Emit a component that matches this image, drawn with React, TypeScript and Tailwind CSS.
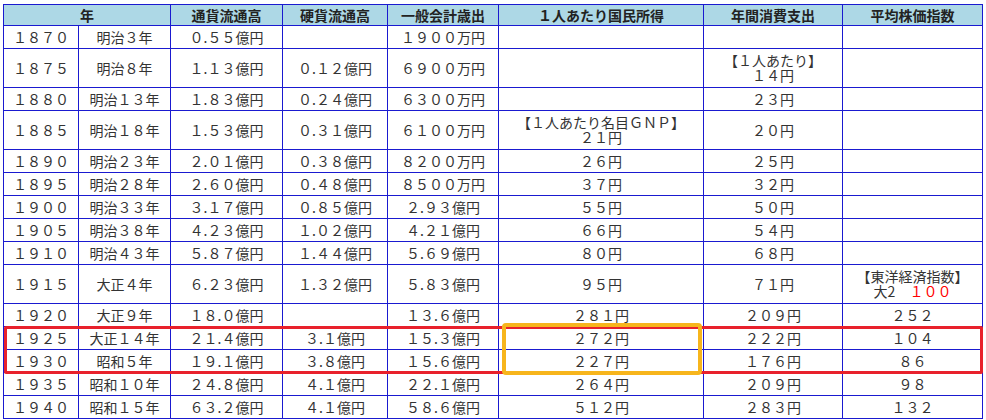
import React from 'react';

type Cell = React.ReactNode;

// two-line cells get a tighter line height, like the original page
function Two({ a, b }: { a: React.ReactNode; b: React.ReactNode }) {
  return (
    <div className="leading-[15px] py-[1px]">
      {a}
      <br />
      {b}
    </div>
  );
}

const rows: Cell[][] = [
  ['１８７０', '明治３年', '０.５５億円', '', '１９００万円', '', '', ''],
  ['１８７５', '明治８年', '１.１３億円', '０.１２億円', '６９００万円', '', <Two a="【１人あたり】" b="１４円" />, ''],
  ['１８８０', '明治１３年', '１.８３億円', '０.２４億円', '６３００万円', '', '２３円', ''],
  ['１８８５', '明治１８年', '１.５３億円', '０.３１億円', '６１００万円', <Two a="【１人あたり名目ＧＮＰ】" b="２１円" />, '２０円', ''],
  ['１８９０', '明治２３年', '２.０１億円', '０.３８億円', '８２００万円', '２６円', '２５円', ''],
  ['１８９５', '明治２８年', '２.６０億円', '０.４８億円', '８５００万円', '３７円', '３２円', ''],
  ['１９００', '明治３３年', '３.１７億円', '０.８５億円', '２.９３億円', '５５円', '５０円', ''],
  ['１９０５', '明治３８年', '４.２３億円', '１.０２億円', '４.２１億円', '６６円', '５４円', ''],
  ['１９１０', '明治４３年', '５.８７億円', '１.４４億円', '５.６９億円', '８０円', '６８円', ''],
  [
    '１９１５', '大正４年', '６.２３億円', '１.３２億円', '５.８３億円', '９５円', '７１円',
    <Two a="【東洋経済指数】" b={<>大2　<span className="text-[#ff0000]">１００</span></>} />,
  ],
  ['１９２０', '大正９年', '１８.０億円', '', '１３.６億円', '２８１円', '２０９円', '２５２'],
  ['１９２５', '大正１４年', '２１.４億円', '３.１億円', '１５.３億円', '２７２円', '２２２円', '１０４'],
  ['１９３０', '昭和５年', '１９.１億円', '３.８億円', '１５.６億円', '２２７円', '１７６円', '８６'],
  ['１９３５', '昭和１０年', '２４.８億円', '４.１億円', '２２.１億円', '２６４円', '２０９円', '９８'],
  ['１９４０', '昭和１５年', '６３.２億円', '４.１億円', '５８.６億円', '５１２円', '２８３円', '１３２'],
];

const widths = [75, 92, 112, 105, 111, 205, 139, 140];

const headers = ['通貨流通高', '硬貨流通高', '一般会計歳出', '１人あたり国民所得', '年間消費支出', '平均株価指数'];

export default function App() {
  return (
    <div
      className="relative w-[986px] h-[420px] overflow-hidden bg-white pl-[3px] pt-[4px] text-[#333333]"
      style={{ fontFamily: '"Noto Sans CJK JP", "Noto Sans", sans-serif' }}
    >
      <table className="table-fixed border-collapse w-[980px] text-[14px] leading-[16px]">
        <colgroup>
          {widths.map((w, i) => (
            <col key={i} style={{ width: w }} />
          ))}
        </colgroup>
        <thead>
          <tr className="bg-[#add8e6]">
            <th colSpan={2} className="border border-[#1a1ad0] py-[2px] font-bold text-[#222]">年</th>
            {headers.map((h) => (
              <th key={h} className="border border-[#1a1ad0] py-[2px] font-bold text-[#222]">{h}</th>
            ))}
          </tr>
        </thead>
        <tbody>
          {rows.map((r, ri) => (
            <tr key={ri}>
              {r.map((c, ci) => (
                <td key={ci} className="border border-[#1a1ad0] py-[3px] text-center whitespace-nowrap">
                  {c}
                </td>
              ))}
            </tr>
          ))}
        </tbody>
      </table>

      <div className="absolute left-[4px] top-[326px] w-[979px] h-[48px] border-[3px] border-[#e8212c] rounded-[2px]" />
      <div className="absolute left-[502px] top-[323px] w-[200px] h-[52px] border-[4px] border-[#f7b51c] rounded-[4px]" />
    </div>
  );
}
